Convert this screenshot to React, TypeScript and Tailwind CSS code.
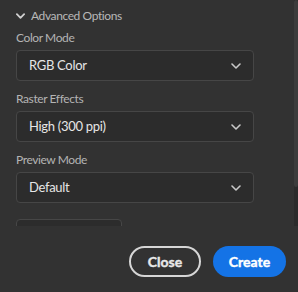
const Chevron = ({ className, w = 1.6 }: { className?: string; w?: number }) => (
  <svg viewBox="0 0 10 6" className={className} fill="none" stroke="currentColor" strokeWidth={w} strokeLinecap="round" strokeLinejoin="round">
    <polyline points="1,1 5,5 9,1" />
  </svg>
);

function Field({ label, value, first }: { label: string; value: string; first?: boolean }) {
  return (
    <div>
      <div className={`${first ? 'mt-[6px]' : 'mt-[10px]'} h-4 flex items-center text-[12px] tracking-[-0.4px] text-[#b4b4b4]`}>{label}</div>
      <div className="mt-1 w-[238px] h-[31px] rounded-[4px] border border-[#464646] bg-[#2c2c2c] flex items-center justify-between pl-[12px] pr-[12px]">
        <span className="text-[13px] tracking-[-0.3px] text-[#e6e6e6]">{value}</span>
        <Chevron className="w-[10px] h-[6px] text-[#c8c8c8]" />
      </div>
    </div>
  );
}

export default function App() {
  return (
    <div className="w-[298px] h-[292px] bg-[#323232] flex flex-col overflow-hidden font-['Lato',sans-serif]">
      <div className="h-[226px] flex overflow-hidden">
        <div className="flex-1 pl-4 pt-2">
          <div className="h-4 flex items-center gap-[6px] text-[12px] tracking-[-0.4px] text-[#b8b8b8]">
            <Chevron className="w-[9px] h-[6px] text-[#d0d0d0]" w={2} />
            <span>Advanced Options</span>
          </div>
          <Field label="Color Mode" value="RGB Color" first />
          <Field label="Raster Effects" value="High (300 ppi)" />
          <Field label="Preview Mode" value="Default" />
          <div className="mt-4 w-[106px] h-[31px] rounded-[4px] border border-[#464646] bg-[#2c2c2c]" />
        </div>
        <div className="w-[4px] flex flex-col bg-[#2b2b2b]">
          <div className="h-[187px] bg-[#3c3c3c] rounded-sm" />
        </div>
      </div>
      <div className="flex justify-end gap-3 pr-3 pt-5">
        <button className="w-[72px] h-[31px] rounded-full border-2 border-[#d6d6d6] text-[14px] font-bold text-[#e8e8e8] [-webkit-text-stroke:0.4px_#e8e8e8]">Close</button>
        <button className="w-[73px] h-[31px] rounded-full bg-[#1473e6] text-[14px] font-bold text-white [-webkit-text-stroke:0.4px_white]">Create</button>
      </div>
    </div>
  );
}
